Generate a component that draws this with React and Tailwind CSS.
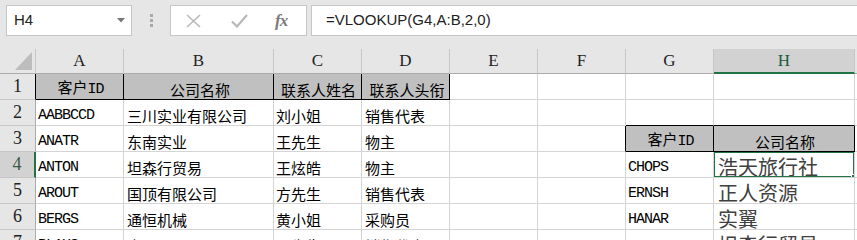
import React from 'react';

const rows = [
  ['客户ID', '公司名称', '联系人姓名', '联系人头衔', '', '', '', ''],
  ['AABBCCD', '三川实业有限公司', '刘小姐', '销售代表', '', '', '', ''],
  ['ANATR', '东南实业', '王先生', '物主', '', '', '客户ID', '公司名称'],
  ['ANTON', '坦森行贸易', '王炫皓', '物主', '', '', 'CHOPS', '浩天旅行社'],
  ['AROUT', '国顶有限公司', '方先生', '销售代表', '', '', 'ERNSH', '正人资源'],
  ['BERGS', '通恒机械', '黄小姐', '采购员', '', '', 'HANAR', '实翼'],
  ['BLAUS', '森通', '王先生', '销售代表', '', '', '', '坦森行贸易'],
];

const letters = ['A', 'B', 'C', 'D', 'E', 'F', 'G', 'H'];

// header cells of the two little tables
const isHead = (r, c) => (r === 1 && c <= 3) || (r === 3 && (c === 6 || c === 7));

function Txt({ s }) {
  const parts = s.split(/([\x00-\x7f]+)/).filter(Boolean);
  return parts.map((p, i) =>
    /^[\x00-\x7f]+$/.test(p) ? (
      <span key={i} className="font-['Liberation_Mono',monospace] text-[15px] tracking-[-1px]">{p}</span>
    ) : (
      <span key={i}>{p}</span>
    )
  );
}

function FormulaBar() {
  return (
    <div className="h-[49px] flex items-start pt-[5px] bg-[#e6e6e6]">
      <div className="ml-[6px] w-[126px] h-[31px] bg-white border border-[#c6c6c6] flex items-center pl-[7px] pr-[6px]">
        <span className="flex-1 font-['Liberation_Sans',sans-serif] text-[15px] text-[#222]">H4</span>
        <svg width="8" height="5" viewBox="0 0 8 5"><path d="M0 0h8L4 4.5z" fill="#777" /></svg>
      </div>
      <div className="w-[38px] h-[31px] flex flex-col items-center justify-center gap-[2px]">
        <span className="w-[3px] h-[3px] bg-[#a8a8a8]" />
        <span className="w-[3px] h-[3px] bg-[#a8a8a8]" />
        <span className="w-[3px] h-[3px] bg-[#a8a8a8]" />
      </div>
      <div className="w-[137px] h-[31px] bg-white border border-[#c6c6c6] flex items-center">
        <svg className="ml-[15px]" width="15" height="14" viewBox="0 0 15 14">
          <path d="M1 1l13 12M14 1L1 13" stroke="#b8b8b8" strokeWidth="1.6" fill="none" />
        </svg>
        <svg className="ml-[30px]" width="17" height="14" viewBox="0 0 17 14">
          <path d="M1 7.5l5 5L16 1" stroke="#b8b8b8" strokeWidth="2.2" fill="none" />
        </svg>
        <span className="ml-[27px] font-['Liberation_Serif',serif] italic font-bold text-[17px] text-[#7a7a7a] tracking-[-1px]">fx</span>
      </div>
      <div className="ml-[4px] flex-1 h-[31px] bg-white border border-[#c6c6c6] border-r-0 flex items-center pl-[14px]">
        <span className="font-['Liberation_Sans',sans-serif] text-[15px] text-[#222]">=VLOOKUP(G4,A:B,2,0)</span>
      </div>
    </div>
  );
}

function cellBorder(r, c) {
  // c: 0..7 for A..H
  const right = isHead(r, c) || isHead(r, c + 1) ? 'border-r-black' : 'border-r-[#d4d4d4]';
  const bottom = isHead(r, c) || isHead(r + 1, c) ? 'border-b-black' : 'border-b-[#d4d4d4]';
  return `${right} ${bottom}`;
}

export default function App() {
  return (
    <div className="w-[857px] h-[240px] overflow-hidden bg-white">
      <FormulaBar />
      <div className="grid grid-cols-[36px_88px_150px_88px_88px_88px_88px_88px_141px_1fr] grid-rows-[25px_26px_26px_26px_26px_26px_26px_26px]">
        {/* column header row */}
        <div className="bg-[#e6e6e6] border-r border-b border-r-[#c6c6c6] border-b-[#ababab] flex items-end justify-end pr-[3px] pb-[3px]">
          <svg width="17" height="18" viewBox="0 0 17 18"><path d="M17 0v18H0z" fill="#bdbdbd" /></svg>
        </div>
        {letters.map((l) =>
          l === 'H' ? (
            <div key={l} className="bg-[#d2d2d2] border-r border-r-[#c6c6c6] border-b-2 border-b-[#217346] flex items-center justify-center font-['Liberation_Serif',serif] text-[17px] text-[#1f5a39]">
              {l}
            </div>
          ) : (
            <div key={l} className="bg-[#e6e6e6] border-r border-b border-r-[#c6c6c6] border-b-[#ababab] flex items-center justify-center font-['Liberation_Serif',serif] text-[17px] text-[#222]">
              {l}
            </div>
          )
        )}
        <div className="bg-[#e6e6e6] border-b border-b-[#ababab]" />

        {rows.map((row, ri) => {
          const r = ri + 1;
          return (
            <React.Fragment key={r}>
              {r === 4 ? (
                <div className="bg-[#d2d2d2] border-r-2 border-b border-r-[#217346] border-b-[#c6c6c6] flex items-center justify-center font-['Liberation_Serif',serif] text-[18px] text-[#3a5a48]">
                  {r}
                </div>
              ) : (
                <div className={`bg-[#e6e6e6] border-r border-b border-b-[#c6c6c6] flex items-center justify-center font-['Liberation_Serif',serif] text-[18px] text-[#222] ${r === 1 ? 'border-r-black' : 'border-r-[#ababab]'}`}>
                  {r}
                </div>
              )}
              {row.map((v, c) => {
                const head = isHead(r, c);
                const big = c === 7 && r >= 4;
                const sel = r === 4 && c === 7;
                return (
                  <div
                    key={c}
                    className={`relative border-r border-b flex items-end overflow-hidden font-['Noto_Sans_CJK_SC',sans-serif] ${cellBorder(r, c)} ${head ? 'bg-[#c0c0c0] justify-center' : 'bg-white'} ${big ? 'pl-[4px] pb-0 text-[20px] leading-[20px] text-[#404040]' : c === 1 || c === 3 ? 'pl-[3px] pb-[1px] text-[15px] leading-[17px] text-black' : 'pl-[2px] pb-[1px] text-[15px] leading-[17px] text-black'}`}
                  >
                    <span className="block whitespace-nowrap">
                      <Txt s={v} />
                    </span>
                    {sel && (
                      <div className="absolute -left-px -top-px right-[-1px] bottom-[-1px] border-2 border-[#217346]">
                        <div className="absolute right-[-4px] bottom-[-4px] w-[6px] h-[6px] bg-[#217346] border border-white" />
                      </div>
                    )}
                  </div>
                );
              })}
              <div className="bg-white border-b border-b-[#d4d4d4]" />
            </React.Fragment>
          );
        })}
      </div>
    </div>
  );
}
